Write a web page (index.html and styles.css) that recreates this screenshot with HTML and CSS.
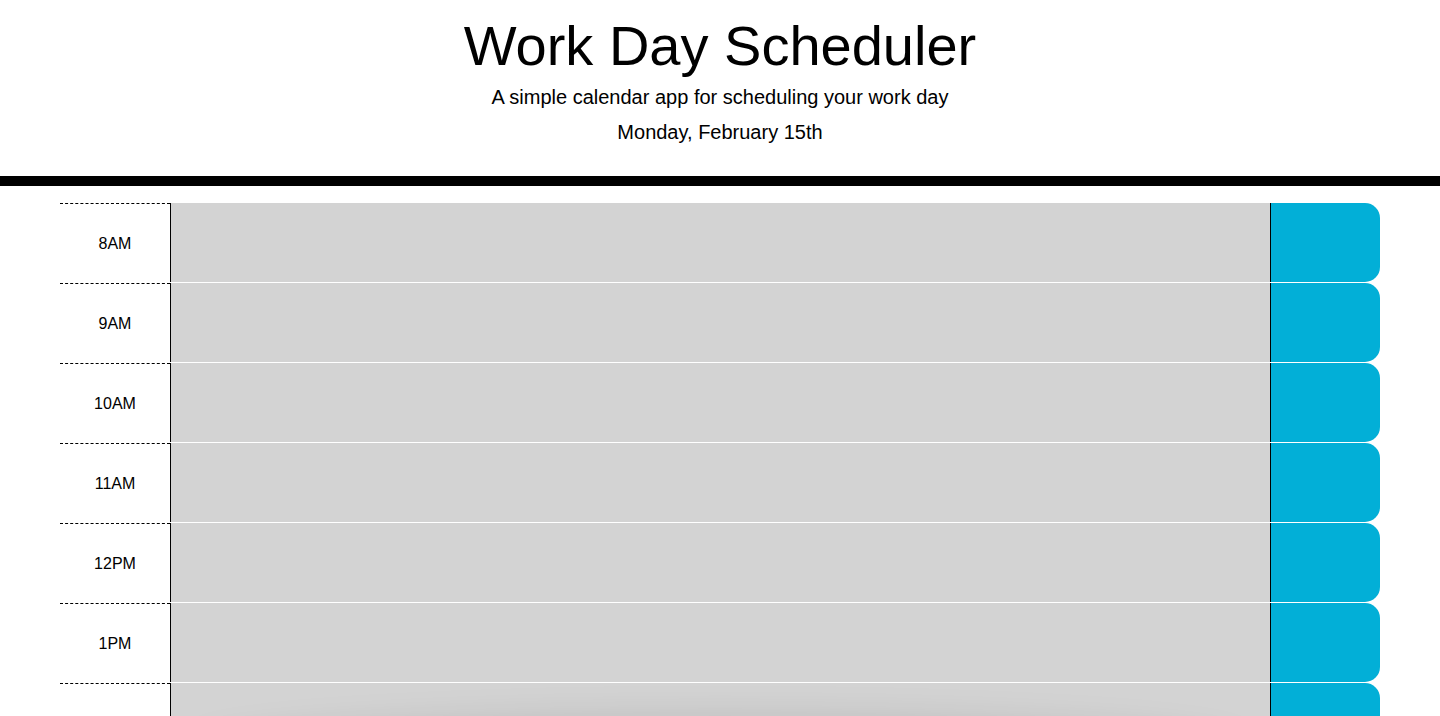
FILE: index.html
```html
<!DOCTYPE html>
<html lang="en">
<head>
<meta charset="utf-8">
<title>Work Day Scheduler</title>
<link rel="stylesheet" href="styles.css">
</head>
<body>
<header class="jumbotron">
  <h1 class="title">Work Day Scheduler</h1>
  <p class="lead">A simple calendar app for scheduling your work day</p>
  <p class="today">Monday, February 15th</p>
</header>
<main class="container">
  <div class="row"><div class="hour">8AM</div><textarea class="description past"></textarea><button class="saveBtn" aria-label="save"></button></div>
  <div class="row"><div class="hour">9AM</div><textarea class="description past"></textarea><button class="saveBtn" aria-label="save"></button></div>
  <div class="row"><div class="hour">10AM</div><textarea class="description past"></textarea><button class="saveBtn" aria-label="save"></button></div>
  <div class="row"><div class="hour">11AM</div><textarea class="description past"></textarea><button class="saveBtn" aria-label="save"></button></div>
  <div class="row"><div class="hour">12PM</div><textarea class="description past"></textarea><button class="saveBtn" aria-label="save"></button></div>
  <div class="row"><div class="hour">1PM</div><textarea class="description past"></textarea><button class="saveBtn" aria-label="save"></button></div>
  <div class="row"><div class="hour">2PM</div><div class="desc-wrap"><textarea class="description past shaded"></textarea><span class="shadow"></span></div><button class="saveBtn" aria-label="save"></button></div>
  <div class="row"><div class="hour">3PM</div><textarea class="description past"></textarea><button class="saveBtn" aria-label="save"></button></div>
  <div class="row"><div class="hour">4PM</div><textarea class="description past"></textarea><button class="saveBtn" aria-label="save"></button></div>
  <div class="row"><div class="hour">5PM</div><textarea class="description past"></textarea><button class="saveBtn" aria-label="save"></button></div>
</main>
</body>
</html>
```

FILE: styles.css
```css
* { box-sizing: border-box; }
body {
  margin: 0;
  font-family: "Liberation Sans", Arial, sans-serif;
  line-height: 1;
  color: #000;
  background: #fff;
}
.jumbotron {
  text-align: center;
  padding: 14px 0 0;
  height: 186px;
  border-bottom: 10px solid #000;
  margin-bottom: 16px;
}
.title {
  margin: 0;
  font-size: 56px;
  font-weight: 300;
  line-height: 64px;
}
.lead {
  margin: 8px 0 0;
  font-size: 20px;
  font-weight: 300;
  line-height: 22px;
}
.today {
  margin: 13px 0 0;
  font-size: 20px;
  font-weight: 300;
  line-height: 22px;
}
.container {
  padding: 0 60px;
}
.row {
  display: flex;
  height: 80px;
  border-top: 1px solid #fff;
}
.hour {
  width: 110px;
  flex: none;
  display: flex;
  align-items: center;
  justify-content: center;
  padding-top: 2px;
  font-size: 16px;
  border-top: 1px dashed #000;
}
.description {
  flex: 1;
  margin: 0;
  border: none;
  border-left: 1px solid #000;
  resize: none;
  padding: 10px;
  font: inherit;
  outline: none;
}
.past { background-color: #d3d3d3; }
.desc-wrap {
  flex: 1;
  display: flex;
  position: relative;
  overflow: hidden;
}
.shadow {
  position: absolute;
  left: 25px;
  right: 25px;
  top: 28px;
  height: 70px;
  border-radius: 50%;
  background: rgba(0, 0, 0, 0.08);
  filter: blur(14px);
  pointer-events: none;
}
.saveBtn {
  width: 110px;
  flex: none;
  margin: 0;
  padding: 0;
  border: none;
  border-left: 1px solid #000;
  border-radius: 0 15px 15px 0;
  background-color: #02afd7;
  cursor: pointer;
}
```
